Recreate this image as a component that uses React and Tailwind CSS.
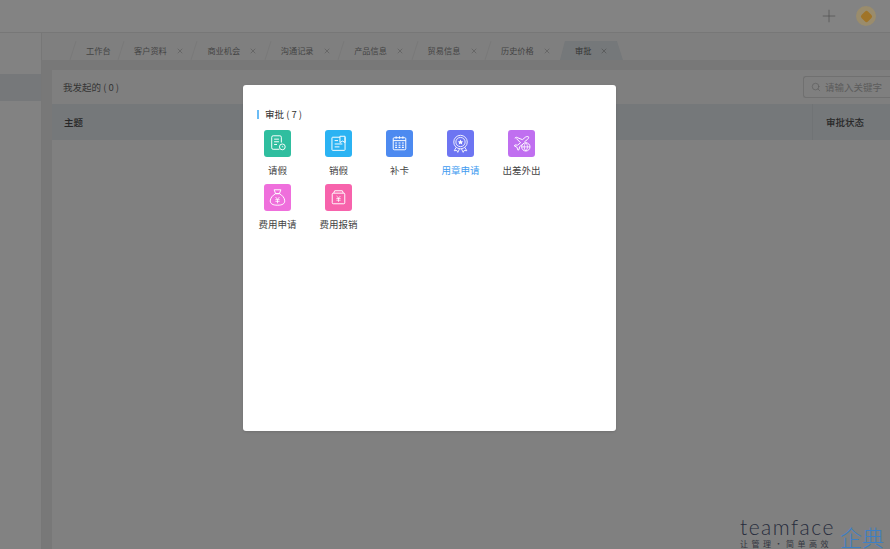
import { Plus, Search, X } from "lucide-react";

const tabs = [
  { name: "工作台", width: "w-[48px]" },
  { name: "客户资料", width: "w-[73.400px]", close: true },
  { name: "商业机会", width: "w-[73.400px]", close: true },
  { name: "沟通记录", width: "w-[73.400px]", close: true },
  { name: "产品信息", width: "w-[73.400px]", close: true },
  { name: "贸易信息", width: "w-[73.400px]", close: true },
  { name: "历史价格", width: "w-[73.400px]", close: true },
];

const NoteIcon = () => (
  <svg viewBox="0 0 28 28" className="w-full h-full" fill="none" stroke="#fff" strokeWidth="1">
    <path d="M16 20H9.500A1.500 1.500 0 0 1 8 18.500v-11A1.500 1.500 0 0 1 9.500 6h7A1.500 1.500 0 0 1 18 7.500V13" />
    <path d="M10.500 9.500h5M10.500 12.200h5M10.500 15h3" />
    <circle cx="19" cy="17.500" r="3" />
    <path d="M19 16.300v1.200h1" strokeWidth="0.700" />
  </svg>
);

const CancelIcon = () => (
  <svg viewBox="0 0 28 28" className="w-full h-full" fill="none" stroke="#fff" strokeWidth="1">
    <path d="M15.500 7.500H8a.8.800 0 0 0-.8.800v12a.8.800 0 0 0 .8.800h12a.8.800 0 0 0 .8-.8V7.500" />
    <path d="M15.500 6.500h5.300V13l-2.600-1.500-2.700 1.500z" />
    <path d="M10 11h3.500M10 14.500h8M10 17.500h5" />
  </svg>
);

const CalendarIcon = () => (
  <svg viewBox="0 0 28 28" className="w-full h-full" fill="none" stroke="#fff" strokeWidth="1">
    <rect x="7.500" y="8" width="13" height="12.500" rx="1" />
    <path d="M7.500 11h13M10.500 6.500V9M14 6.500V9M17.500 6.500V9" />
    <path d="M9.500 13.500h2M13 13.500h2M16.500 13.500h2M9.500 15.800h2M13 15.800h2M16.500 15.800h2M9.500 18h2M13 18h2M16.500 18h2" strokeWidth="1.100" />
  </svg>
);

const SealIcon = () => (
  <svg viewBox="0 0 28 28" className="w-full h-full" fill="none" stroke="#fff" strokeWidth="0.900">
    <circle cx="14" cy="12.500" r="7" />
    <circle cx="14" cy="12.500" r="4.800" />
    <path d="M14 9.800l.9 1.800 1.900.2-1.400 1.300.4 1.900-1.800-.9-1.800.9.400-1.900-1.400-1.300 1.900-.2z" fill="#fff" stroke="none" />
    <path d="M9.500 18l-2 3.500 2.700-.3 1 2 1.800-3.700M18.500 18l2 3.500-2.700-.3-1 2-1.800-3.700" />
  </svg>
);

const TripIcon = () => (
  <svg viewBox="0 0 28 28" className="w-full h-full" fill="none" stroke="#fff" strokeWidth="1">
    <path d="M7 8.500l1.500-1 6.500 2.500 3-2.500c1-.8 2.800-1 3.300-.4.400.6-.2 2-1.300 2.900l-3 2.300M15 15l-3 2.300-.5 3-1.200.6-1-3-2.800-1.400.7-1 2.800.2 3-2.500-4.500-4.500" />
    <circle cx="18.500" cy="17.500" r="4.300" />
    <path d="M14.200 17.500h8.600M18.500 13.200c-2.200 2.600-2.200 6 0 8.600 2.200-2.600 2.200-6 0-8.600z" strokeWidth="0.800" />
  </svg>
);

const MoneyBagIcon = () => (
  <svg viewBox="0 0 28 28" className="w-full h-full" fill="none" stroke="#fff" strokeWidth="1">
    <path d="M10.500 6h7l-1.500 4h-4z" />
    <path d="M12 10h4c3 1.800 5.500 4.500 5.500 7.500 0 3-2.500 4.500-7.500 4.500s-7.500-1.500-7.500-4.500c0-3 2.500-5.700 5.500-7.500z" />
    <path d="M12 13.500l2 2.500 2-2.500M11.800 16.200h4.400M11.800 18h4.400M14 16v4" strokeWidth="0.800" />
  </svg>
);

const ReimburseIcon = () => (
  <svg viewBox="0 0 28 28" className="w-full h-full" fill="none" stroke="#fff" strokeWidth="1">
    <rect x="7.500" y="9.500" width="13" height="11" rx="1" />
    <path d="M9 9.500L10 7h8l1 2.500" />
    <path d="M12 12.500l2 2 2-2M11.800 15h4.400M11.800 16.800h4.400M14 14.500v4" strokeWidth="0.800" />
  </svg>
);

const apps = [
  { name: "请假", bg: "bg-[#2fbe9f]", Icon: NoteIcon },
  { name: "销假", bg: "bg-[#2bb3f3]", Icon: CancelIcon },
  { name: "补卡", bg: "bg-[#4d8af0]", Icon: CalendarIcon },
  { name: "用章申请", bg: "bg-[#6d75f2]", Icon: SealIcon, active: true },
  { name: "出差外出", bg: "bg-[#c06ff0]", Icon: TripIcon },
  { name: "费用申请", bg: "bg-[#ef6fdc]", Icon: MoneyBagIcon },
  { name: "费用报销", bg: "bg-[#f763ac]", Icon: ReimburseIcon },
];

const App = () => {
  return (
    <div className="relative w-[890px] h-[549px] overflow-hidden bg-[#808080] text-[#3a3a3a] font-['Noto_Sans_CJK_SC','Noto_Sans',sans-serif]">
      {/* top bar */}
      <div className="h-[33px] flex items-center justify-end border-b border-[#777777] bg-[#838383]">
        <Plus className="w-[20px] h-[20px] mr-[17px] text-[#4c4c4c]" strokeWidth={0.8} />
        <div className="w-[20px] h-[20px] rounded-full bg-[#9a8c6c] flex items-center justify-center mr-[14px]">
          <div className="w-[9px] h-[9px] rounded-[2px] rotate-45 bg-[#a07428]"></div>
        </div>
      </div>

      <div className="flex h-[516px]">
        {/* sidebar */}
        <div className="w-[42px] shrink-0 bg-[#828282] border-r border-[#777777] pt-[41px]">
          <div className="h-[27px] bg-[#76787a]"></div>
        </div>

        <div className="flex-1 flex flex-col bg-[#787878]">
          {/* tabs */}
          <div className="h-[27px] shrink-0 bg-[#7f7f7f] flex items-end pl-[31px] text-[8.2px] leading-none">
            {tabs.map((t) => (
              <div key={t.name} className={`relative ${t.width} h-[19px] shrink-0 flex items-center pl-[13px] text-[#444444]`}>
                <svg className="absolute left-[-4px] top-0 w-[8px] h-[19px]" viewBox="0 0 8 19" fill="none" stroke="#757575" strokeWidth="0.600">
                  <path d="M1 19L7 0" />
                </svg>
                <span>{t.name}</span>
                {t.close && <X className="absolute left-[55px] w-[8px] h-[8px] text-[#505050]" strokeWidth={1.500} />}
              </div>
            ))}
            <div className="w-[63px] h-[19px] shrink-0 -ml-[1.400px] bg-[#75787a] [clip-path:polygon(5px_0,57px_0,63px_100%,0_100%)] flex items-center pl-[15px] relative text-[#333333]">
              <span>审批</span>
              <X className="absolute left-[40px] w-[8px] h-[8px] text-[#444444]" strokeWidth={1.500} />
            </div>
          </div>

          {/* list */}
          <div className="flex-1 mt-[10px] ml-[10px] bg-[#808080]">
            <div className="h-[34px] flex items-center justify-between pl-[11px] bg-[#7f7f7f]">
              <span className="text-[9.500px] text-[#353535]">我发起的 ( 0 )</span>
              <div className="w-[87px] h-[22px] border border-r-0 border-[#707070] rounded-l-[3px] flex items-center pl-[7px] gap-[4px] text-[9.500px] text-[#5c5c5c]">
                <Search className="w-[10px] h-[10px]" strokeWidth={1.500} />
                <span>请输入关键字</span>
              </div>
            </div>
            <div className="h-[36px] flex items-center justify-between bg-[#75787a] text-[9.500px] font-medium text-[#272727]">
              <span className="pl-[12px]">主题</span>
              <span className="w-[78px] h-full flex items-center pl-[13px] border-l border-[#707375]">审批状态</span>
            </div>
          </div>
        </div>
      </div>

      {/* dialog */}
      <div className="absolute left-[243px] top-[85px] w-[373px] h-[346px] bg-white rounded-[3px] shadow-sm pt-[24px] px-[14px]">
        <div className="flex items-center h-[10px] text-[9.500px] text-[#333333]">
          <span className="w-[2px] h-[9px] shrink-0 bg-[#6bbcf5] mr-[6px]"></span>
          <span>审批 ( 7 )</span>
        </div>
        <div className="grid grid-cols-[repeat(5,61px)] auto-rows-[54px] mt-[11px] -ml-[10px]">
          {apps.map(({ name, bg, Icon, active }) => (
            <div key={name} className="flex flex-col items-center">
              <div className={`w-[27px] h-[27px] rounded-[3px] ${bg}`}>
                <Icon />
              </div>
              <span className={`mt-[7px] text-[9.500px] leading-[13px] whitespace-nowrap ${active ? "text-[#3f9bf0]" : "text-[#444444]"}`}>{name}</span>
            </div>
          ))}
        </div>
      </div>

      {/* watermark */}
      <div className="absolute left-[740px] top-[516px] flex items-start">
        <div className="flex flex-col">
          <span className="font-['Lato',sans-serif] font-light text-[21px] leading-[22px] tracking-[1.500px] text-[#272c3c]">teamface</span>
          <span className="mt-[2px] text-[8px] leading-[8px] tracking-[3.500px] text-[#33363f] whitespace-nowrap">让管理·简单高效</span>
        </div>
        <span className="ml-[5px] mt-[8px] text-[22px] leading-[24px] font-light text-[#3d7fc4] whitespace-nowrap">企典</span>
      </div>
    </div>
  );
};

export default App;
